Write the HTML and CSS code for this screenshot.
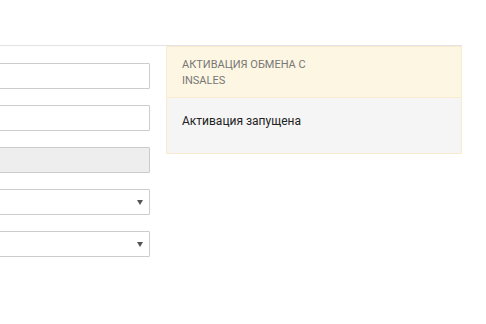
FILE: index.html
```html
<!DOCTYPE html>
<html lang="ru">
<head>
  <meta charset="UTF-8">
  <meta name="viewport" content="width=device-width, initial-scale=1.0">
  <title>Активация обмена с InSales</title>
  <link rel="stylesheet" href="styles.css">
</head>
<body>
  <div class="page">
    <div class="content">
      <form class="form">
        <input class="field" type="text">
        <input class="field" type="text">
        <input class="field" type="text" disabled>
        <div class="select"><select class="field"><option></option></select></div>
        <div class="select"><select class="field"><option></option></select></div>
      </form>

      <div class="panel">
        <div class="panel-heading">
          <h3 class="panel-title">Активация обмена с InSales</h3>
        </div>
        <div class="panel-body">
          <p>Активация запущена</p>
        </div>
      </div>
    </div>
  </div>
</body>
</html>
```

FILE: styles.css
```css
body {
  margin: 0;
  overflow: hidden;
  background: #fff;
  font-family: Roboto, "Liberation Sans", sans-serif;
  color: #333;
}

.page {
  padding-top: 45px;
}

.content {
  display: flex;
  gap: 16px;
  align-items: flex-start;
  width: 482px;
  margin-left: -20px;
  border-top: 1px solid #e3e3e3;
}

.form {
  width: 170px;
  flex: none;
  display: flex;
  flex-direction: column;
  gap: 16px;
  padding-top: 17px;
  margin: 0;
}

.field {
  display: block;
  box-sizing: border-box;
  width: 100%;
  height: 26px;
  margin: 0;
  padding: 0 8px;
  border: 1px solid #ccc;
  border-radius: 1px;
  background: #fff;
  font: inherit;
  font-size: 13px;
  appearance: none;
  -webkit-appearance: none;
}

.field:disabled {
  background: #eee;
}

.select {
  position: relative;
}

.select::after {
  content: "";
  position: absolute;
  right: 7px;
  top: 11px;
  border-left: 3px solid transparent;
  border-right: 3px solid transparent;
  border-top: 5px solid #555;
}

.panel {
  flex: 1;
  border: 1px solid #f8ebcf;
  background: #f5f5f5;
}

.panel-heading {
  padding: 10px 15px 8px;
  background: #fdf6e2;
  border-bottom: 1px solid #f8ebcf;
}

.panel-title {
  max-width: 150px;
  margin: 0;
  font-size: 11px;
  font-weight: normal;
  line-height: 16px;
  text-transform: uppercase;
  color: #777;
}

.panel-body {
  padding: 14px 15px 13px;
}

.panel-body p {
  margin: 0 0 10px;
  font-size: 12px;
  line-height: 18px;
  color: #222;
}
```
